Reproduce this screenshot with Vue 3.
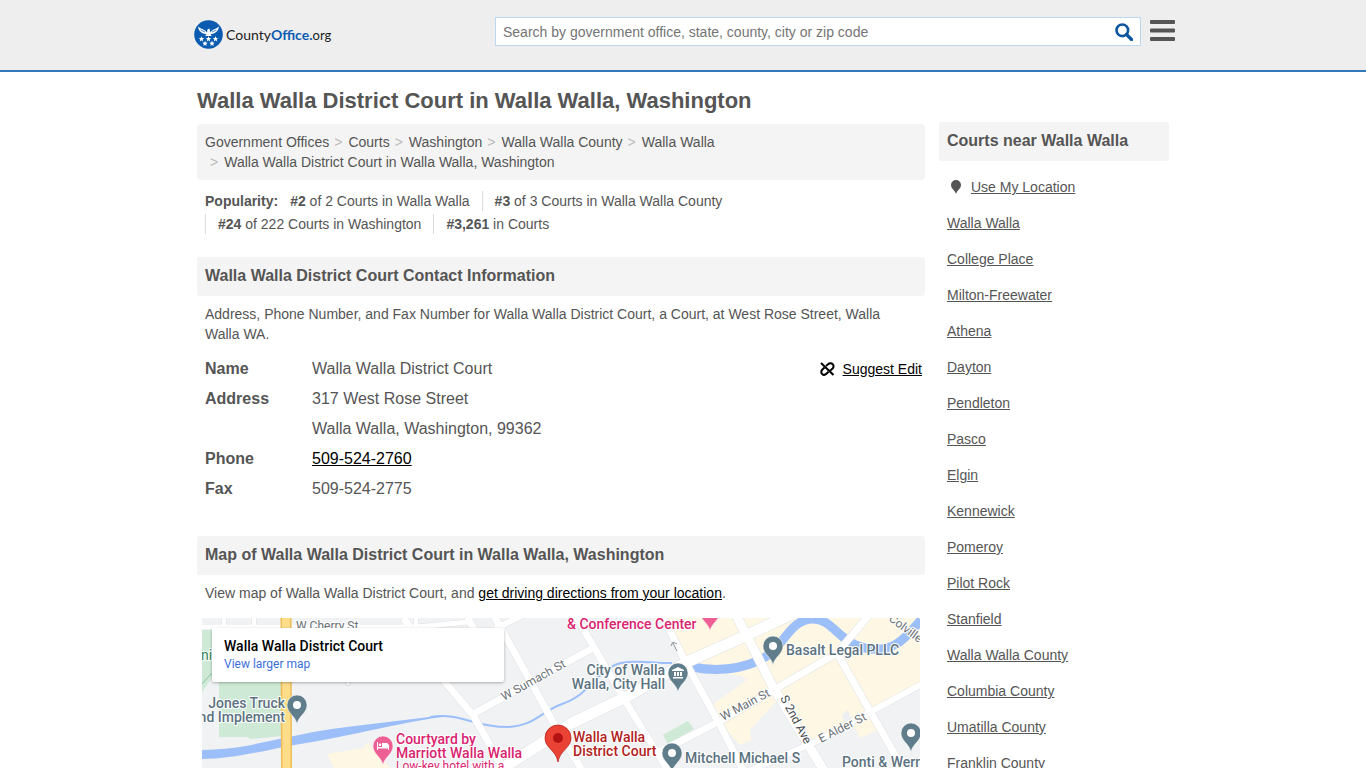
<script setup>
import { ref } from 'vue'

const query = ref('')

const crumbs = [
  'Government Offices',
  'Courts',
  'Washington',
  'Walla Walla County',
  'Walla Walla',
  'Walla Walla District Court in Walla Walla, Washington'
]

const ranks = [
  { rank: '#2', text: 'of 2 Courts in Walla Walla' },
  { rank: '#3', text: 'of 3 Courts in Walla Walla County' },
  { rank: '#24', text: 'of 222 Courts in Washington' },
  { rank: '#3,261', text: 'in Courts' }
]

const nearby = [
  'Walla Walla',
  'College Place',
  'Milton-Freewater',
  'Athena',
  'Dayton',
  'Pendleton',
  'Pasco',
  'Elgin',
  'Kennewick',
  'Pomeroy',
  'Pilot Rock',
  'Stanfield',
  'Walla Walla County',
  'Columbia County',
  'Umatilla County',
  'Franklin County'
]

const stars = [
  [7.5, 19],
  [14.5, 19],
  [21.5, 19],
  [11, 23.5],
  [18, 23.5]
]

const roads = [
  { d: 'M-5 9H215L266 4', w: 5 },
  { d: 'M22 -5V9M52 -5V9M214 -5V9', w: 4 },
  { d: 'M202 0L243 64L271 97L302 152L392 300', w: 7 },
  { d: 'M264 -5L272 12', w: 7 },
  { d: 'M291 -4L305 21L351 104L380 152L460 290', w: 7 },
  { d: 'M293 11L325 -5', w: 6 },
  { d: 'M271 96L391 30', w: 7 },
  { d: 'M372 -5L425 86L467 154L550 300', w: 7 },
  { d: 'M459 -5L485 47L518 107L541 152L620 300', w: 7 },
  { d: 'M455 135L475 125L518 103L575 70L635 35L668 -4', w: 7 },
  { d: 'M635 35L668 93L703 154L780 290', w: 7 },
  { d: 'M545 154L615 123L668 94L724 64', w: 6 },
  { d: 'M285 160L348 120L368 106L428 77L485 44L541 19L590 -4', w: 11 },
  { d: 'M533 -5L571 69L624 156L700 290', w: 9 }
]

const pins = [
  { x: 95, y: 87, kind: 'place' },
  { x: 476, y: 55, kind: 'hall' },
  { x: 571, y: 28, kind: 'place' },
  { x: 470, y: 135, kind: 'place' },
  { x: 709, y: 115, kind: 'place' },
  { x: 181, y: 128, kind: 'hotel' },
  { x: 508, y: -6, kind: 'hotel' }
]
</script>

<template>
  <header class="site-header">
    <div class="header-inner">
      <a class="logo" href="#" aria-label="CountyOffice.org">
        <svg width="29" height="29" viewBox="0 0 29 29" aria-hidden="true">
          <circle cx="14.5" cy="14.5" r="14.3" fill="#0b5cb0" />
          <g fill="#fff">
            <path d="M4 6.500C6 8.500 9 9 11 10.500L13 12.500L13.500 9.500L15 8.500L16 9.500L16 12.500L18 10.500C20 9 23 8.500 25 6.500C24.500 10 22.500 13 18.500 13.800L16.500 14.200L17.800 16H11.200L12.500 14.200L10.500 13.800C6.500 13 4.500 10 4 6.500z" />
            <path
              v-for="star in stars"
              :key="star.join()"
              :transform="`translate(${star[0]} ${star[1]})`"
              d="M0-2.700L.8-.9 2.700-.8 1.200.5 1.700 2.400 0 1.300-1.700 2.400-1.200.5-2.700-.8-.8-.9z"
            />
          </g>
          <path d="M6.500 10L11 12M22.500 10L18 12" stroke="#0b5cb0" stroke-width=".7" />
        </svg>
        <span class="logo-text">County<b>Office.</b><span class="logo-org">org</span></span>
      </a>
      <div class="header-tools">
        <form class="search" role="search" @submit.prevent>
          <input
            v-model="query"
            type="text"
            aria-label="Search"
            placeholder="Search by government office, state, county, city or zip code"
          />
          <button type="submit" aria-label="Search">
            <svg width="18" height="18" viewBox="0 0 18 18">
              <circle cx="7.300" cy="7.300" r="5.800" fill="none" stroke="#0b559f" stroke-width="2.600" />
              <path d="M11.500 11.500l5 5" stroke="#0b559f" stroke-width="3.200" stroke-linecap="round" />
            </svg>
          </button>
        </form>
        <button class="menu" type="button" aria-label="Menu">
          <svg width="25" height="22" viewBox="0 0 25 22" fill="#555">
            <rect width="25" height="4" rx="1" />
            <rect y="8.500" width="25" height="4" rx="1" />
            <rect y="17" width="25" height="4" rx="1" />
          </svg>
        </button>
      </div>
    </div>
  </header>

  <div class="page">
    <main class="content">
      <h1>Walla Walla District Court in Walla Walla, Washington</h1>
      <ol class="breadcrumb">
        <li v-for="crumb in crumbs" :key="crumb"><a href="#">{{ crumb }}</a></li>
      </ol>

      <div class="popularity">
        <strong>Popularity:</strong>
        <span v-for="item in ranks" :key="item.rank" class="rank">
          <b>{{ item.rank }}</b> {{ item.text }}
        </span>
      </div>

      <section class="contact">
        <h2>Walla Walla District Court Contact Information</h2>
        <p>
          Address, Phone Number, and Fax Number for Walla Walla District Court, a Court, at West
          Rose Street, Walla Walla WA.
        </p>
        <div class="details">
          <dl>
            <dt>Name</dt>
            <dd>Walla Walla District Court</dd>
            <dt>Address</dt>
            <dd>317 West Rose Street<br />Walla Walla, Washington, 99362</dd>
            <dt>Phone</dt>
            <dd><a href="tel:509-524-2760">509-524-2760</a></dd>
            <dt>Fax</dt>
            <dd>509-524-2775</dd>
          </dl>
          <a class="suggest" href="#">
            <svg width="15" height="14" viewBox="0 0 15 14" fill="none" stroke="#000" stroke-width="2">
              <path d="M1 1l12.500 12" />
              <path d="M6 4L8 2.300C9.300 1.100 11.500 1 12.700 2.200C13.900 3.400 13.800 5.400 12.600 6.500L10 8.700" />
              <path d="M4.500 5.500L2.200 7.700C1 8.900 1 10.800 2.100 11.900C3.300 13 5.200 12.900 6.400 11.800L8.500 9.800" />
            </svg>
            <span>Suggest Edit</span>
          </a>
        </div>
      </section>

      <section>
        <h2>Map of Walla Walla District Court in Walla Walla, Washington</h2>
        <p>
          View map of Walla Walla District Court, and
          <a href="#">get driving directions from your location</a>.
        </p>
        <div class="map">
          <svg class="map-canvas" viewBox="0 0 718 300" preserveAspectRatio="xMidYMin slice">
            <rect width="718" height="300" fill="#f0f2f4" />
            <g fill="#cee9d6">
              <path d="M0 12H17V119L46 119L48 121L80 118V20H17V50L0 74z" />
              <path d="M461 117L486 103L492 111L466 126z" />
            </g>
            <path d="M0 66L9 56L17 54" fill="none" stroke="#8fc3a2" />
            <g fill="#fef7e3">
              <path d="M462 0H718V67L672 94L678 111L658 120L651 106L611 124L581 76L548 112L551 122L538 127L525 113L511 86L545 62L540 58L487 52L464 6z" />
              <path d="M125 136L161 130L166 124L188 150H132z" />
            </g>
            <path d="M548 112L586 93L606 124L552 145z" fill="#f0f2f4" />
            <path d="M640 97L646 92L650 103L643 106z" fill="#eceef1" />

            <g fill="none" stroke="#9dbff9" stroke-linejoin="round">
              <path fill="#9dbff9" stroke="none" d="M0 132C40 131 60 124 92 118C140 107 190 105 240 97V99C190 106 160 116 92 127C55 134 30 141 0 141z" />
              <path stroke-width="2" d="M228 99C260 94 270 109 305 109C333 108 338 94 360 86C388 76 388 60 411 48C426 40 455 46 470 45" />
              <path stroke-width="9" d="M490 49C515 54 535 52 556 43C583 31 586 1 611 1C631 1 636 24 663 30C693 36 704 19 719 2" />
            </g>

            <g fill="none" stroke="#dfe2e6" stroke-linejoin="round">
              <path v-for="road in roads" :key="road.d" :d="road.d" :stroke-width="road.w + 1" />
            </g>
            <g fill="none" stroke="#fff" stroke-linejoin="round">
              <path v-for="road in roads" :key="road.d" :d="road.d" :stroke-width="road.w" />
            </g>
            <path d="M84 -5L85 305" stroke="#eebd55" stroke-width="11" />
            <path d="M84 -5L85 305" stroke="#fddc8a" stroke-width="8" />
            <rect x="144" y="60" width="4" height="8" rx="2" fill="#fff" stroke="#d5d8dc" />
            <path d="M469 28l2-4 4 2M471 25l4 8" fill="none" stroke="#8b9196" />

            <g class="street">
              <text x="94" y="12">W Cherry St</text>
              <text transform="translate(302 83) rotate(-29)">W Sumach St</text>
              <text transform="translate(521 103) rotate(-28)">W Main St</text>
              <text class="dark" transform="translate(578 80) rotate(62)">S 2nd Ave</text>
              <text transform="translate(619 125) rotate(-27)">E Alder St</text>
              <text transform="translate(686 2) rotate(37)">Colville St</text>
            </g>

            <g v-for="pin in pins" :key="pin.x" :transform="`translate(${pin.x} ${pin.y})`">
              <path
                :class="pin.kind"
                stroke="#fff"
                stroke-width=".5"
                d="M0 19C-1.500 11-10 8-10 0A10 10 0 1 1 10 0C10 8 1.500 11 0 19z"
              />
              <circle v-if="pin.kind === 'place'" r="4" fill="#fff" />
              <path v-else-if="pin.kind === 'hall'" fill="#fff" d="M0-6L6-3V-2H-6V-3zM-4-1h2v4h-2zM-1-1h2v4h-2zM2-1h2v4h-2zM-5 4H5V5.500H-5z" />
              <path v-else fill="#fff" d="M-6-4H-5V1H-1V-3H4L6-1V4H5V2.500H-5V4H-6zM-3-2.500a1.300 1.300 0 1 1 0 2.600 1.300 1.300 0 0 1 0-2.600z" />
            </g>
            <g transform="translate(356 120)">
              <path fill="#ea4335" stroke="#b31412" stroke-width=".7" d="M0 24C-2 12-13 10-13 0A13 13 0 1 1 13 0C13 10 2 12 0 24z" />
              <circle r="5" fill="#b31412" />
            </g>

            <g class="poi">
              <text class="park" x="-1" y="42">ni</text>
              <text x="83" y="90" text-anchor="end">Jones Truck</text>
              <text x="83" y="104" text-anchor="end">and Implement</text>
              <text x="463" y="57" text-anchor="end">City of Walla</text>
              <text x="463" y="71" text-anchor="end">Walla, City Hall</text>
              <text x="584" y="37">Basalt Legal PLLC</text>
              <text x="483" y="145">Mitchell Michael S</text>
              <text x="640" y="149">Ponti &amp; Wern</text>
              <g class="pink">
                <text x="365" y="11">&amp; Conference Center</text>
                <text class="small" x="194" y="152">Low-key hotel with a...</text>
                <text x="194" y="126">Courtyard by</text>
                <text x="194" y="140">Marriott Walla Walla</text>
              </g>
              <g class="red">
                <text x="371" y="124">Walla Walla</text>
                <text x="371" y="138">District Court</text>
              </g>
            </g>
          </svg>
          <div class="map-card">
            <div class="map-card-title">Walla Walla District Court</div>
            <a href="#">View larger map</a>
          </div>
        </div>
      </section>
    </main>

    <aside class="sidebar">
      <h2>Courts near Walla Walla</h2>
      <ul>
        <li>
          <svg width="10" height="14" viewBox="0 0 10 14" aria-hidden="true">
            <path fill="#555" d="M5 14C4 10.500 0 8.500 0 5a5 5 0 0 1 10 0c0 3.500-4 5.500-5 9z" />
          </svg>
          <a href="#">Use My Location</a>
        </li>
        <li v-for="place in nearby" :key="place"><a href="#">{{ place }}</a></li>
      </ul>
    </aside>
  </div>
</template>

<style>
html {
  scrollbar-width: none;
}

body {
  margin: 0;
  background: #fff;
}
</style>

<style scoped>
.site-header,
.page {
  font-family: "Liberation Sans", Arial, Helvetica, sans-serif;
  font-size: 14px;
  line-height: 20px;
  color: #555;
}

.site-header {
  background: #eee;
  border-bottom: 2px solid #3279b7;
}

.header-inner {
  display: flex;
  justify-content: space-between;
  align-items: flex-start;
  gap: 24px;
  box-sizing: border-box;
  max-width: 984px;
  height: 70px;
  margin: 0 auto;
  padding: 17px 0 0 3px;
}

.logo {
  display: flex;
  align-items: center;
  gap: 3px;
  padding-top: 3px;
  color: #222;
  text-decoration: none;
}

.logo-text {
  font-family: Lato, sans-serif;
  font-size: 14px;
}

.logo-text b {
  color: #0b5cb0;
}

.logo-org {
  font-size: 13px;
}

.header-tools {
  display: flex;
  flex: 0 1 680px;
  gap: 9px;
}

.search {
  display: flex;
  flex: 1;
  box-sizing: border-box;
  height: 29px;
  background: #fff;
  border: 1px solid #bdd8ee;
}

.search input {
  flex: 1;
  min-width: 0;
  padding: 0 7px;
  border: 0;
  outline: 0;
  background: none;
  font: inherit;
  color: #555;
}

.search input::placeholder {
  color: #757575;
}

button {
  padding: 0;
  border: 0;
  background: none;
  cursor: pointer;
}

.search button {
  width: 32px;
}

button svg {
  display: block;
  margin: 0 auto;
}

.menu {
  align-self: flex-start;
  padding-top: 3px;
}

.page {
  display: flex;
  align-items: flex-start;
  gap: 14px;
  max-width: 972px;
  margin: 0 auto;
  padding-top: 16px;
}

.content {
  flex: 1;
  min-width: 0;
}

.sidebar {
  flex: 0 0 230px;
  padding-top: 34px;
}

h1 {
  margin: 0 0 10px;
  font-size: 22px;
  line-height: 26px;
}

h2 {
  margin: 0;
  padding: 7px 8px 9px;
  background: #f4f4f4;
  border-radius: 3px;
  font-size: 16px;
  line-height: 23px;
}

.breadcrumb {
  margin: 0 0 10px;
  padding: 8px;
  background: #f4f4f4;
  border-radius: 4px;
  list-style: none;
  display: flex;
  flex-wrap: wrap;
}

.breadcrumb a {
  color: #555;
  text-decoration: none;
}

.breadcrumb li + li::before {
  content: ">";
  padding: 0 6px 0 5px;
  color: #bbb;
}

.popularity {
  display: flex;
  flex-wrap: wrap;
  row-gap: 3px;
  padding: 1px 8px 0;
  margin-bottom: 23px;
}

.rank {
  padding: 0 12px;
  border-left: 1px solid #ddd;
}

.popularity strong + .rank {
  border-left: 0;
}

.contact {
  margin-bottom: 32px;
}

section p {
  margin: 0;
  padding: 8px;
}

section p a,
dd a,
.suggest {
  color: #000;
}

.details {
  display: flex;
  justify-content: space-between;
  align-items: flex-start;
  padding: 2px 3px 0 8px;
}

dl {
  display: grid;
  grid-template-columns: 107px auto;
  margin: 0;
  font-size: 16px;
  line-height: 30px;
}

dt {
  font-weight: bold;
}

dd {
  margin: 0;
}

.suggest {
  display: flex;
  align-items: center;
  gap: 8px;
  padding-top: 5px;
  text-decoration: none;
}

.suggest span {
  text-decoration: underline;
}

.map {
  position: relative;
  height: 300px;
  margin: 7px 5px 0;
  overflow: hidden;
  font-family: Roboto, sans-serif;
}

.map-canvas {
  display: block;
  width: 100%;
  height: 100%;
}

.map-card {
  position: absolute;
  top: 10px;
  left: 10px;
  box-sizing: border-box;
  width: 292px;
  padding: 9px 12px;
  background: #fff;
  border-radius: 2px;
  box-shadow: 0 1px 3px rgba(0, 0, 0, 0.3);
  font-size: 12px;
  line-height: 18px;
}

.map-card-title {
  color: #000;
  font-size: 14px;
  font-weight: 500;
}

.map-card a {
  color: #3d6fd9;
  text-decoration: none;
}

.street text,
.poi text {
  paint-order: stroke;
  stroke: #fff;
  stroke-width: 2px;
  stroke-linejoin: round;
}

.street text {
  font-size: 12px;
  fill: #6b7075;
}

.street .dark {
  fill: #44484c;
}

.poi text {
  font-size: 14px;
  font-weight: 500;
  fill: #5b7280;
}

.poi .park {
  font-weight: 400;
  fill: #2f8552;
}

.poi .pink text {
  fill: #d8256f;
}

.poi .pink .small {
  font-size: 12px;
  font-weight: 400;
}

.poi .red text {
  fill: #b3221c;
}

.place,
.hall {
  fill: #607d8b;
}

.hotel {
  fill: #ee5f94;
}

.sidebar ul {
  display: flex;
  flex-direction: column;
  gap: 16px;
  margin: 0;
  padding: 16px 8px;
  list-style: none;
}

.sidebar li {
  display: flex;
  align-items: center;
}

.sidebar li svg {
  margin: 0 10px 0 4px;
}

.sidebar a {
  color: #555;
}
</style>
